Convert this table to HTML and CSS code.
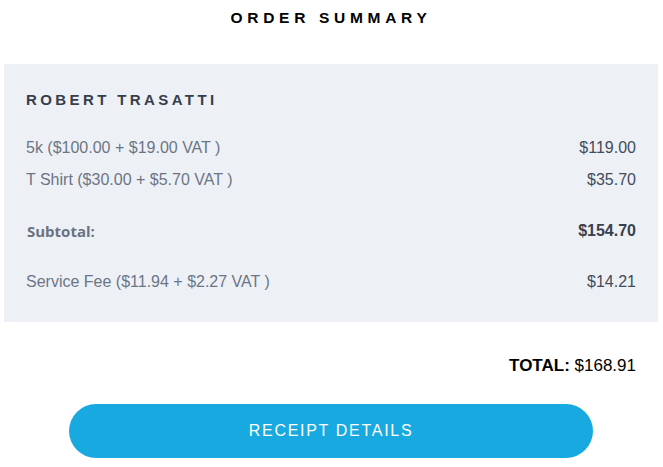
FILE: index.html
```html
<!DOCTYPE html>
<html>
<head>
<meta charset="utf-8">
<link rel="stylesheet" href="styles.css">
</head>
<body>
<div class="page">
  <h1 class="title">ORDER SUMMARY</h1>
  <section class="card">
    <h2 class="name">ROBERT TRASATTI</h2>
    <div class="items">
      <div class="row"><span class="label">5k ($100.00 + $19.00 VAT )</span><span class="amount">$119.00</span></div>
      <div class="row"><span class="label">T Shirt ($30.00 + $5.70 VAT )</span><span class="amount">$35.70</span></div>
    </div>
    <div class="row subtotal"><span class="label">Subtotal:</span><span class="amount">$154.70</span></div>
    <div class="row fee"><span class="label">Service Fee ($11.94 + $2.27 VAT )</span><span class="amount">$14.21</span></div>
  </section>
  <div class="total"><strong>TOTAL:</strong> $168.91</div>
  <div class="actions"><button class="btn">RECEIPT DETAILS</button></div>
</div>
</body>
</html>
```
FILE: styles.css
```css
* { box-sizing: border-box; }
body { margin: 0; background: #fff; font-family: "Liberation Sans", Arial, sans-serif; }
.page { padding: 0 5px 0 4px; }
.title {
  margin: 0;
  padding-top: 9px;
  height: 64px;
  text-align: center;
  font-size: 15.5px;
  line-height: 18px;
  font-weight: bold;
  letter-spacing: 4.7px;
  color: #000;
}
.card {
  background: #edf1f5;
  padding: 27px 22px 31px 22px;
}
.name {
  margin: 0 0 30px 0;
  font-size: 15px;
  line-height: 18px;
  font-weight: bold;
  letter-spacing: 3.4px;
  color: #363d4b;
}
.row {
  display: flex;
  justify-content: space-between;
  font-size: 16px;
  line-height: 18px;
}
.items { display: flex; flex-direction: column; gap: 14px; }
.label { color: #6c7585; }
.amount { color: #434b5a; }
.subtotal { margin-top: 33px; }
.subtotal .label {
  font-family: "Open Sans", sans-serif;
  font-size: 15px;
  font-weight: bold;
  color: #6b7280;
  padding-left: 1px;
}
.subtotal .amount { font-weight: bold; color: #3a404d; }
.fee { margin-top: 33px; }
.total {
  text-align: right;
  padding: 34px 22px 0 0;
  font-size: 17px;
  line-height: 20px;
  color: #000;
}
.total strong { font-weight: bold; }
.actions {
  display: flex;
  justify-content: center;
  padding-top: 28px;
}
.btn {
  width: 524px;
  height: 54px;
  border: 0;
  border-radius: 27px;
  background: #18a9e0;
  color: #fff;
  font-family: "Liberation Sans", Arial, sans-serif;
  font-size: 16px;
  letter-spacing: 1.7px;
  padding: 0;
}
```
